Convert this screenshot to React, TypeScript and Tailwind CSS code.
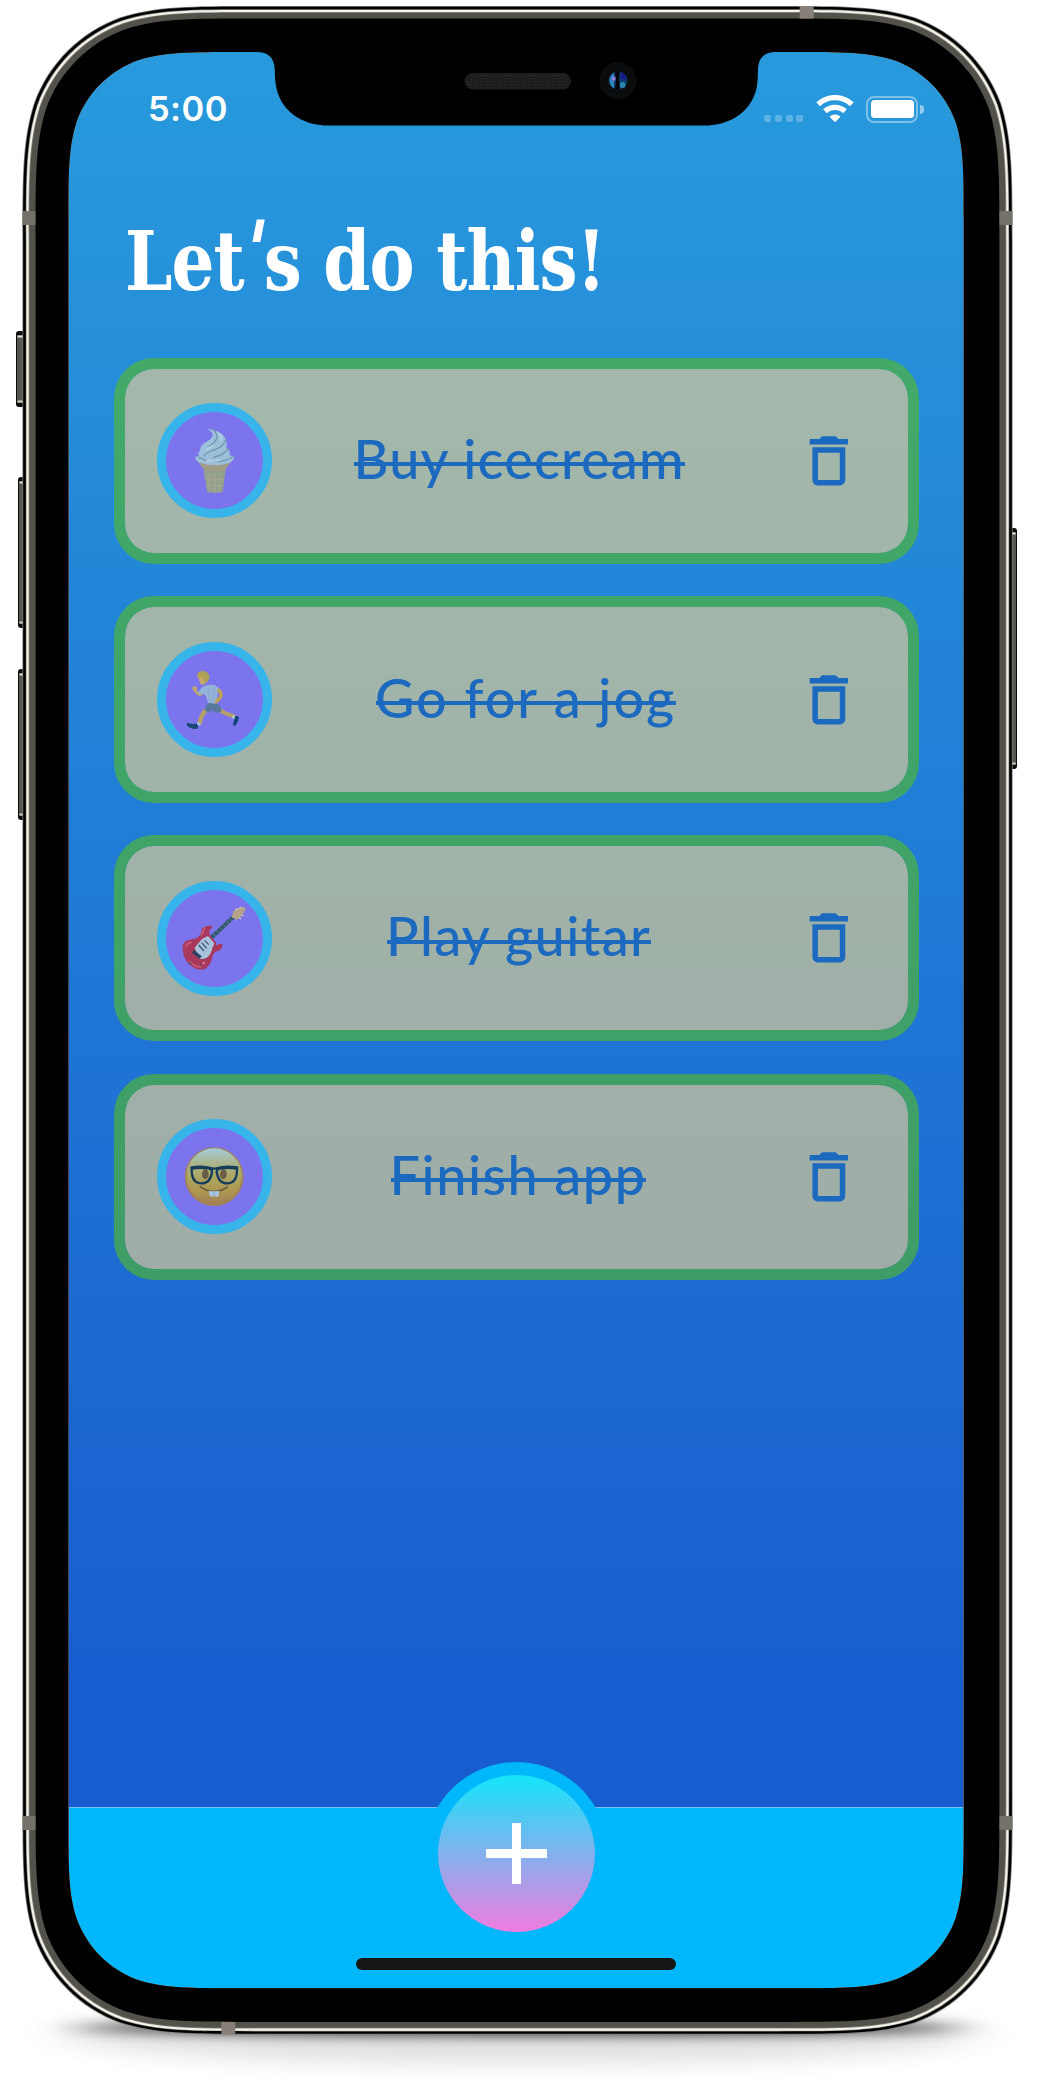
import React from "react";

/** Rounded rectangle with continuous (iOS style) corners. */
function squircle(x: number, y: number, w: number, h: number, r: number): string {
  const a = 1.528665 * r, b = 1.088493 * r, c = 0.868407 * r, d = 0.631494 * r;
  const e = 0.074911 * r, f = 0.372824 * r, g = 0.16906 * r;
  const R = x + w, B = y + h;
  return [
    `M${x + a} ${y}L${R - a} ${y}`,
    `C${R - b} ${y} ${R - c} ${y} ${R - d} ${y + e}`,
    `C${R - f} ${y + g} ${R - g} ${y + f} ${R - e} ${y + d}`,
    `C${R} ${y + c} ${R} ${y + b} ${R} ${y + a}`,
    `L${R} ${B - a}`,
    `C${R} ${B - b} ${R} ${B - c} ${R - e} ${B - d}`,
    `C${R - g} ${B - f} ${R - f} ${B - g} ${R - d} ${B - e}`,
    `C${R - c} ${B} ${R - b} ${B} ${R - a} ${B}`,
    `L${x + a} ${B}`,
    `C${x + b} ${B} ${x + c} ${B} ${x + d} ${B - e}`,
    `C${x + f} ${B - g} ${x + g} ${B - f} ${x + e} ${B - d}`,
    `C${x} ${B - c} ${x} ${B - b} ${x} ${B - a}`,
    `L${x} ${y + a}`,
    `C${x} ${y + b} ${x} ${y + c} ${x + e} ${y + d}`,
    `C${x + g} ${y + f} ${x + f} ${y + g} ${x + d} ${y + e}`,
    `C${x + c} ${y} ${x + b} ${y} ${x + a} ${y}Z`,
  ].join("");
}

const SCREEN = squircle(68.4, 52, 895.4, 1936.3, 110);

function SideButton({ x, y, w, h }: { x: number; y: number; w: number; h: number }) {
  return (
    <g>
      <rect x={x} y={y} width={w} height={h} rx="3" fill="#0b0b0a" />
      <rect x={x + 1} y={y + 4} width={w - 2} height={h - 8} rx="1" fill="#57554f" />
      <rect x={x + 1.5} y={y + 4.5} width={w - 3} height="2" fill="#e6e4dc" />
      <rect x={x + 1.5} y={y + h - 6.5} width={w - 3} height="2" fill="#d5d3cb" />
    </g>
  );
}

function PhoneFrame() {
  return (
    <svg className="pointer-events-none absolute inset-0" width="1038" height="2096" viewBox="0 0 1038 2096">
      <defs>
        <pattern id="mesh" width="3" height="3" patternUnits="userSpaceOnUse">
          <rect width="3" height="3" fill="#141414" />
          <rect width="1.4" height="1.4" fill="#303030" />
          <rect x="1.5" y="1.5" width="1.3" height="1.3" fill="#2a2a2a" />
        </pattern>
      </defs>
      <SideButton x={16} y={331} w={9} h={76} />
      <SideButton x={18} y={477} w={7} h={151} />
      <SideButton x={18} y={669} w={7} h={151} />
      <SideButton x={1010} y={528} w={7} h={241} />
      <g fillRule="evenodd">
        <path d={squircle(22.4, 6, 990.2, 2028.6, 154) + SCREEN} fill="#7d7d7b" />
        <path d={squircle(23.2, 6.8, 988.6, 2027, 153.5) + SCREEN} fill="#000" />
        <path d={squircle(25.8, 9.2, 983.4, 2022.2, 151.5) + SCREEN} fill="#8e8c84" />
        <path d={squircle(26.5, 9.9, 982, 2020.8, 151) + SCREEN} fill="#f3f1e8" />
        <path d={squircle(28.6, 12, 977.8, 2016.6, 149) + SCREEN} fill="#8b8981" />
        <path d={squircle(29.4, 12.8, 976.2, 2015, 148) + SCREEN} fill="#52514b" />
        <path d={squircle(35.6, 18.6, 963.8, 2003.4, 142) + SCREEN} fill="#000" />
      </g>
      <g fill="#74716a">
        <rect x="22.5" y="211" width="13" height="14" />
        <rect x="999.5" y="211" width="13" height="14" />
        <rect x="22.5" y="1816" width="13" height="14" />
        <rect x="999.5" y="1816" width="13" height="14" />
        <rect x="799.7" y="6" width="14" height="12.6" fill="#868078" />
        <rect x="221.3" y="2022" width="14" height="12.4" fill="#868078" />
      </g>
      <path
        d="M254 50V52H256C269 52 274 58 274.7 69C275 75 275 79 276 86C280 109 300 125.6 329 125.6H703.4C733 125.6 753 109 757 86C758 79 757.700 75 758 69C758.600 58 763.700 52 776.500 52H779V50Z"
        fill="#000"
      />
      <rect x="464.500" y="73" width="106.500" height="16.500" rx="8.250" fill="url(#mesh)" />
      <circle cx="618" cy="80.500" r="18.500" fill="#0b0c0d" />
      <ellipse cx="618" cy="80.500" rx="9.500" ry="9" fill="#0d3a66" />
      <path d="M614 72.500c-6 4-6 12 0 16z" fill="#2b83b8" />
      <path d="M621 72.500c3 0 5 3 5 7h-5z" fill="#17188a" />
      <circle cx="622.500" cy="85" r="3" fill="#2c86b4" />
      <circle cx="613.800" cy="78.500" r="2.200" fill="#8b7fe0" />
      <path d="M615 71.500h5l-1 8 1 10h-5l1-8z" fill="#02040a" />
    </svg>
  );
}

function GroundShadow() {
  return (
    <svg className="absolute inset-0" width="1038" height="2096" viewBox="0 0 1038 2096">
      <defs>
        <filter id="soft" x="-20%" y="-300%" width="140%" height="700%">
          <feGaussianBlur stdDeviation="22 6" />
        </filter>
        <filter id="wide" x="-20%" y="-200%" width="140%" height="500%">
          <feGaussianBlur stdDeviation="30 11" />
        </filter>
      </defs>
      <ellipse cx="519" cy="2034" rx="455" ry="30" fill="#000" opacity=".12" filter="url(#wide)" />
      <ellipse cx="519" cy="2028" rx="445" ry="8" fill="#000" opacity=".7" filter="url(#soft)" />
    </svg>
  );
}

function WifiIcon() {
  return (
    <svg width="38" height="28" viewBox="0 0 38 28" fill="none" stroke="#fff" strokeWidth="5.400">
      <path d="M2.200 9.300a24.500 24.500 0 0 1 33.600 0" />
      <path d="M9 16.300a14.700 14.700 0 0 1 20 0" />
      <path d="M19 27.300l-5.500-5.600a8.200 8.200 0 0 1 11 0z" fill="#fff" stroke="none" />
    </svg>
  );
}

function StatusBar() {
  return (
    <div className="flex h-[114px] shrink-0 items-center justify-between pr-[40px] pl-[79.500px]">
      <span className="font-[Inter,sans-serif] text-[34.5px] leading-none font-[560] tracking-[0.500px] text-white">5:00</span>
      <div className="flex items-center">
        <div className="mt-[18px] mr-[13px] flex gap-[3.700px]">
          {[0, 1, 2, 3].map((n) => (
            <span key={n} className="size-[7px] rounded-[2px] bg-white/25" />
          ))}
        </div>
        <WifiIcon />
        <div className="ml-[12px] flex h-[27px] w-[52px] rounded-[8px] border-2 border-white/40 p-[2.500px]">
          <span className="flex-1 rounded-[3.500px] bg-white" />
        </div>
        <span className="ml-[2px] h-[9px] w-[3.500px] rounded-r-full bg-white/50" />
      </div>
    </div>
  );
}

function IceCream() {
  return (
    <svg className="size-20" viewBox="225 243 240 240">
      <path d="M297 366l22 28q27 4 57 0l19-28q-46 18-98 0z" fill="#a09d86" />
      <path d="M313 390q32 10 67 0l-9 66q-24 4-46 0z" fill="#93a08c" />
      <path d="M330 400v57M347 402v57M364 400l-3 57M318 416q28 8 58 0M321 436q26 7 52 0" stroke="#aaa991" strokeWidth="3" fill="none" />
      <path d="M288 350q2 16 20 20 38 12 80 0 14-5 18-20l-14-4q3-16-10-22 4-20-6-34-16-20-50-23 18 10 14 22-4 10-20 18-18 10-16 24-10 8-4 18z" fill="#9cbfda" />
      <path d="M341 269q20 12 10 32-8 12-24 20M380 300q-8 22-40 32-24 8-24 16M388 326q-12 20-46 26M300 352q20 12 50 12 34 0 52-14" stroke="#7397ae" strokeWidth="4" fill="none" strokeLinecap="round" />
      <path d="M356 277q14 10 10 24M322 330q8-8 20-13M325 362q22 3 36-2" stroke="#b7d3e8" strokeWidth="5" fill="none" strokeLinecap="round" />
    </svg>
  );
}

function Runner() {
  return (
    <svg className="size-20" viewBox="104 119 240 240">
      <path d="M206 264q-20 14-26 48" stroke="#b59f62" strokeWidth="13" fill="none" />
      <path d="M238 268q22 14 46 20" stroke="#b59f62" strokeWidth="12" fill="none" strokeLinecap="round" />
      <path d="M192 214q-8 12-16 6t-10-14" stroke="#bda564" strokeWidth="9" fill="none" strokeLinecap="round" />
      <circle cx="166" cy="205" r="7" fill="#c0a968" />
      <path d="M186 202q16-12 40-8l16 12-8 16-4 30-24 2q-2-26-14-36-8 8-16 0z" fill="#94b3d9" />
      <path d="M206 204q2 24 8 48M224 204l-2 44" stroke="#88a8d2" strokeWidth="3" fill="none" />
      <path d="M206 248l28 2q14 8 12 24l-18 4-10-8-12 6-10-6q2-14 10-22z" fill="#59779f" />
      <path d="M238 210q12 8 4 22l-11 12" stroke="#bda255" strokeWidth="10" fill="none" strokeLinecap="round" strokeLinejoin="round" />
      <path d="M177 168q2 14 6 22 8 6 14 0l8-12-2-14z" fill="#c1a968" />
      <path d="M173 164q2-12 18-12 18 2 19 18-1 14-11 17-8-4-7-14-8-6-19-2z" fill="#aea055" />
      <path d="M144 307l18 5q10-5 15 0l-2 13-12 1q-18-5-21-12z" fill="#174777" />
      <path d="M174 305l10 3-2 8-9-3z" fill="#a6c0df" />
      <path d="M280 285l8 3-3 9-7-4z" fill="#b5cce6" />
      <path d="M287 288q10-4 12 4-3 16-11 24-7 1-7-6 4-10 6-22z" fill="#124577" />
    </svg>
  );
}

function Guitar() {
  return (
    <svg className="size-20" viewBox="104 115 240 240">
      <path d="M212 238l70-66" stroke="#315a70" strokeWidth="12" />
      <path d="M222 222l6 8M232 212l6 8M242 203l6 8M252 194l6 8M262 184l6 8M271 176l6 8" stroke="#7890a0" strokeWidth="2" />
      <path d="M276 172q6-8 6-18 8-8 18-8l8-5 11 4-4 12-9 12-14 11z" fill="#b5a388" />
      <path d="M290 152l4-7M300 148l6-6M299 174l6 4M306 166l6 3" stroke="#d1c9b5" strokeWidth="4" />
      <path d="M130 258q4-16 22-18 22-2 30-14 6-10 6-20 10-8 28-8 8 4-2 10-8 8-2 18l6 8 12 14q-2 14 8 6 10-5 12 4-4 14-18 17-12 6-14 22-6 24-24 32-24 4-46-16-20-22-18-55z" fill="#a9395c" />
      <path d="M140 262q2-12 16-14M186 226q8-10 9-22M150 306q18 16 34 16" stroke="#c65c78" strokeWidth="5" fill="none" strokeLinecap="round" />
      <path d="M166 264l22-26 18-9 18 20q2 8-5 16-4 22-18 30-10 4-22 2z" fill="#a9c3dc" />
      <path d="M178 256l16 18M187 249l15 17M196 242l12 13" stroke="#3a5875" strokeWidth="4" />
      <path d="M163 270l24 20-6 8-22-18z" fill="#29435f" />
      <circle cx="193" cy="310" r="3" fill="#d8a7bb" />
      <circle cx="184" cy="316" r="3" fill="#6c4263" />
      <circle cx="152" cy="311" r="4" fill="#57566f" />
    </svg>
  );
}

function NerdFace() {
  return (
    <svg className="size-20" viewBox="104 831 240 240">
      <defs>
        <linearGradient id="skin" x1="0" y1="0" x2="0" y2="1">
          <stop offset="0" stopColor="#a4cbdc" />
          <stop offset=".25" stopColor="#a9b792" />
          <stop offset=".5" stopColor="#aca763" />
          <stop offset=".78" stopColor="#ae9650" />
          <stop offset="1" stopColor="#a07f55" />
        </linearGradient>
      </defs>
      <circle cx="224.500" cy="950" r="88" fill="#a3834f" />
      <circle cx="224.500" cy="948" r="83" fill="url(#skin)" />
      <ellipse cx="198" cy="943" rx="10" ry="15" fill="#6a5c47" />
      <ellipse cx="252" cy="943" rx="10" ry="15" fill="#6a5c47" />
      <path d="M153 923q36-7 66 2 6 2 12 0 30-9 66-2M157 930q0 40 30 40 26 0 31-34 0-10-14-11-24-3-47 1zM293 930q0 40-30 40-26 0-31-34 0-10 14-11 24-3 47 1z" fill="none" stroke="#143e5c" strokeWidth="7" strokeLinejoin="round" />
      <path d="M184 981q40 27 80 0" fill="none" stroke="#705b3e" strokeWidth="5" strokeLinecap="round" />
      <path d="M208 992q16 4 32 0l-2 16q-7 4-13 0-7 4-14 0z" fill="#a9c6df" />
      <path d="M224 994v15" stroke="#7f98b6" strokeWidth="2" />
    </svg>
  );
}

function TrashIcon() {
  return (
    <svg className="size-[65.700px]" viewBox="0 0 24 24" fill="#1b6ac0">
      <path d="M6 19c0 1.100.9 2 2 2h8c1.100 0 2-.9 2-2V7H6v12zM8 9h8v10H8V9zm7.500-5l-1-1h-5l-1 1H5v2h14V4h-3.500z" />
    </svg>
  );
}

const todos = [
  { label: "Buy icecream", Icon: IceCream, box: "w-[331px]", spacing: "tracking-[1.2px]", shift: "ml-[82px]" },
  { label: "Go for a jog", Icon: Runner, box: "w-[300px]", spacing: "tracking-[2px]", shift: "ml-[104px]" },
  { label: "Play guitar", Icon: Guitar, box: "w-[264px]", spacing: "tracking-[1.4px]", shift: "ml-[115px]" },
  { label: "Finish app", Icon: NerdFace, box: "w-[255px]", spacing: "tracking-[1.5px]", shift: "ml-[119px]" },
];

export default function App() {
  return (
    <main className="relative h-[2096px] w-[1038px] overflow-hidden bg-white pt-[52px] pl-[68.400px]">
      <GroundShadow />
      <div className="relative flex h-[1936px] w-[895.400px] flex-col overflow-hidden rounded-[90px] bg-linear-to-b/srgb from-[#289adc] to-[#185dcf] to-84% font-[Lato,sans-serif]">
        <StatusBar />
        <h1 className="mt-[45px] ml-[57px] h-[100px] origin-left scale-x-[0.904] font-['DejaVu_Serif_Condensed','DejaVu_Serif',serif] text-[83px] leading-[100px] font-bold tracking-[-1px] whitespace-nowrap text-white">
          Let<span className="relative -top-[10px] inline-block -skew-x-12">'</span>s do this!
        </h1>
        <ul className="mx-[45.200px] mt-[46.700px] flex flex-col gap-[32.300px]">
          {todos.map(({ label, Icon, box, spacing, shift }) => (
            <li
              key={label}
              className="flex h-[206.360px] items-center rounded-[40px] border-[11.500px] border-[#51b82da6] bg-[#e7cf91a6] bg-clip-padding pr-[14px] pl-[32px]"
            >
              <div className="flex size-[115px] shrink-0 items-center justify-center rounded-full border-[9.400px] border-[#37b5ea] bg-[#7c74ed]">
                <Icon />
              </div>
              <div className={`relative flex h-[70px] items-center justify-center ${box} ${shift}`}>
                <span className={`relative -top-[2px] text-[54px] leading-[70px] font-medium whitespace-nowrap text-[#1b6ac0] ${spacing}`}>{label}</span>
                <span className="absolute inset-x-0 top-[36.500px] h-[4px] bg-[#1b6ac0]" />
              </div>
              <button className="ml-auto mr-[32px]">
                <TrashIcon />
              </button>
            </li>
          ))}
        </ul>
        <nav className="mt-auto flex h-[181px] shrink-0 flex-col items-center border-t border-[#73bdf2] bg-[#00b7fb]">
          <button className="-mt-[46px] flex size-[183px] shrink-0 items-center justify-center rounded-full bg-[#00b7fb]">
            <span className="flex size-[157px] items-center justify-center rounded-full bg-linear-to-b/srgb from-[#14e5fb] to-[#f07cdf]">
              <svg className="size-[61px]" viewBox="0 0 61 61" fill="#fff">
                <path d="M26 0h9v26h26v9H35v26h-9V35H0v-9h26z" />
              </svg>
            </span>
          </button>
          <span className="mt-[13px] h-[12px] w-[320px] rounded-full bg-[#161614]" />
        </nav>
      </div>
      <PhoneFrame />
    </main>
  );
}
